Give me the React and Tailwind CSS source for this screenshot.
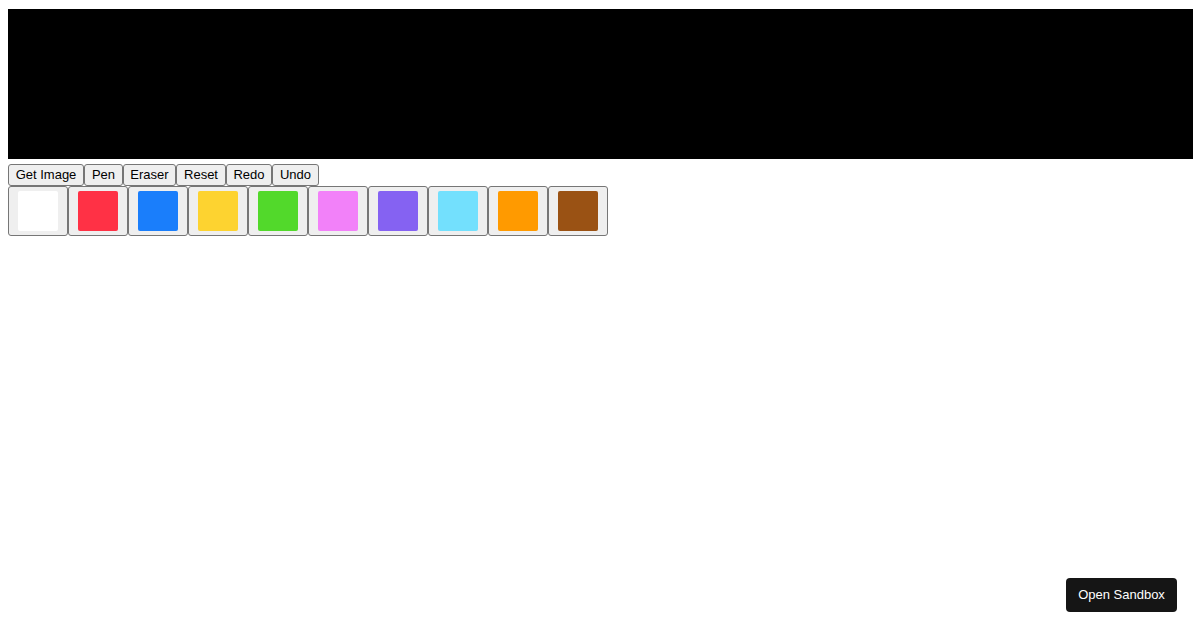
import React from "react";

const colors = ["#ffffff", "#ff3145", "#1a7efb", "#fdd330", "#52d92b", "#f281f9", "#8562f2", "#73e0fd", "#ff9a00", "#9a5214"];
const tools = [
  { t: "Get Image", w: "w-[76px]" },
  { t: "Pen", w: "w-[39px]" },
  { t: "Eraser", w: "w-[53px]" },
  { t: "Reset", w: "w-[50px]" },
  { t: "Redo", w: "w-[46px]" },
  { t: "Undo", w: "w-[47px]" },
];

export default function App() {
  return (
    <div className="relative w-[1200px] h-[630px] bg-white p-[8px] pt-[9px]" style={{ fontFamily: '"Liberation Sans", Arial, sans-serif' }}>
      <div className="w-[1185px] h-[150px] bg-black" />
      <div className="flex mt-[5px]">
        {tools.map(({ t, w }) => (
          <button key={t} className={`${w} h-[22px] px-0 pb-[1px] flex items-center justify-center border border-[#767676] rounded-[3px] bg-[#efefef] text-[13px] text-black leading-none`}>
            {t}
          </button>
        ))}
      </div>
      <div className="flex">
        {colors.map((c) => (
          <button key={c} className="w-[60px] h-[50px] flex items-center justify-center border border-[#767676] rounded-[3px] bg-[#efefef]">
            <span className="block w-[40px] h-[40px] rounded-[2px]" style={{ backgroundColor: c }} />
          </button>
        ))}
      </div>
      <button className="absolute left-[1066px] top-[578px] w-[111px] h-[34px] rounded-[4px] bg-[#151515] text-white text-[13px]" style={{ fontFamily: '"Liberation Sans", Arial, sans-serif' }}>
        Open Sandbox
      </button>
    </div>
  );
}
